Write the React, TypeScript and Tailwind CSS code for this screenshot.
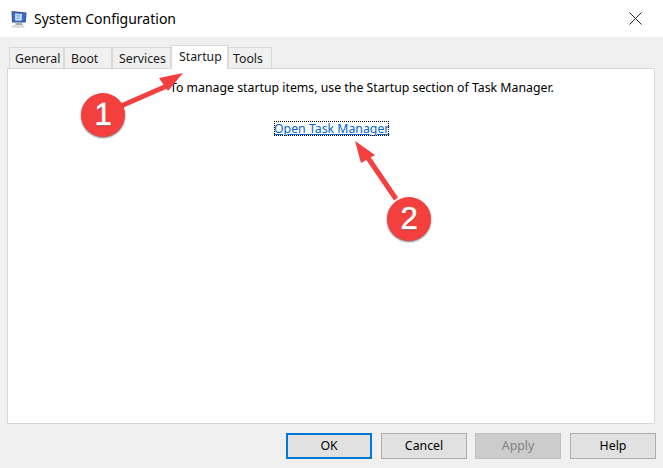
const tabs = [
  { label: "General", width: "w-[55px]", pad: "pl-[5px]" },
  { label: "Boot", width: "w-[48px]", pad: "pl-[6px]" },
  { label: "Services", width: "w-[59px]", pad: "pl-[6px]" },
];

function AppIcon() {
  return (
    <svg width="18" height="18" viewBox="0 0 18 18">
      <path d="M1.5 1 L16.5 2.5 L15.8 12.6 L2 12.6 Z" fill="#48587c" />
      <path d="M2.8 2.4 L15.2 3.6 L14.6 11.4 L3.2 11.4 Z" fill="#2c6cf0" />
      <path d="M5.2 3.4 L12 4.1 L11.6 10.4 L5.2 10.4 Z" fill="#e4effc" />
      <path d="M6.4 5.2h4M6.4 6.9h4M6.4 8.6h3.4" stroke="#5f96e6" strokeWidth="0.9" />
      <path d="M6 12.6 L12 12.6 L13 15 L5 15 Z" fill="#a9acb2" />
      <path d="M1.5 15.4 L15 15.4 L13.5 17.6 L3 17.6 Z" fill="#d0d2d6" />
    </svg>
  );
}

function Badge({ n, className }: { n: string; className: string }) {
  return (
    <div
      className={`absolute w-[44px] h-[44px] rounded-full bg-[#f43f3f] shadow-[0_1px_2px_rgba(0,0,0,0.55)] flex items-center justify-center text-white text-[31px] font-['Liberation_Sans',sans-serif] [-webkit-text-stroke:0.6px_white] [text-shadow:0_1px_1px_rgba(0,0,0,0.5)] ${className}`}
    >
      {n}
    </div>
  );
}

function DialogButton({ label, variant, className }: { label: string; variant?: "default" | "disabled"; className?: string }) {
  const look =
    variant === "default"
      ? "border-2 border-[#0078d7] bg-[#e1e1e1] text-black"
      : variant === "disabled"
        ? "border border-[#bfbfbf] bg-[#cccccc] text-[#838383]"
        : "border border-[#adadad] bg-[#e1e1e1] text-black";
  return (
    <div className={`w-[86px] h-[26px] flex items-center justify-center text-[12.3px] ${look} ${className ?? ""}`}>
      {label}
    </div>
  );
}

export default function App() {
  return (
    <div className="relative w-[663px] h-[468px] overflow-hidden flex flex-col bg-[#f0f0f0] font-['Noto_Sans',sans-serif] text-[#1a1a1a]">
      {/* title bar */}
      <div className="h-[37px] bg-white flex items-center pl-[10px] pr-[21px]">
        <AppIcon />
        <span className="ml-[6px] text-[14px] text-black">System Configuration</span>
        <svg className="ml-auto" width="13" height="13" viewBox="0 0 13 13">
          <path d="M0.5 0.5 L12.5 12.5 M12.5 0.5 L0.5 12.5" stroke="#222" strokeWidth="1" />
        </svg>
      </div>

      {/* tabs */}
      <div className="h-[31px] flex items-end pl-[9px] text-[12.3px]">
        {tabs.map((t) => (
          <div
            key={t.label}
            className={`h-[22px] ${t.width} ${t.pad} pt-[1px] flex items-center border border-b-0 border-[#d9d9d9] -mb-px bg-[#f0f0f0]`}
          >
            {t.label}
          </div>
        ))}
        <div className="relative z-10 h-[24px] w-[57px] pl-[7px] flex items-center border border-b-0 border-[#d9d9d9] -mb-px bg-white pb-[1px]">
          Startup
        </div>
        <div className="h-[22px] w-[44px] pl-[4px] pt-[1px] flex items-center border border-b-0 border-[#d9d9d9] -mb-px bg-[#f0f0f0]">
          Tools
        </div>
      </div>

      {/* panel */}
      <div className="ml-[7px] w-[648px] h-[356px] bg-white border border-[#d9d9d9] flex flex-col items-start text-[12.3px]">
        <p className="mt-[10px] ml-[162px] text-black">To manage startup items, use the Startup section of Task Manager.</p>
        <a className="mt-[24px] ml-[266px] text-[#0066cc] underline outline-1 outline-dotted outline-black -outline-offset-1 leading-[15px]">
          Open Task Manager
        </a>
      </div>

      {/* buttons */}
      <div className="flex justify-end pr-[7px] mt-[9px]">
        <DialogButton label="OK" variant="default" />
        <DialogButton label="Cancel" className="ml-[9px]" />
        <DialogButton label="Apply" variant="disabled" className="ml-[8px]" />
        <DialogButton label="Help" className="ml-[9px]" />
      </div>

      {/* annotations */}
      <svg className="absolute inset-0 pointer-events-none" width="663" height="468" viewBox="0 0 663 468">
        <path d="M121 106 L169 85" stroke="#f43f3f" strokeWidth="5" />
        <path d="M183 73 L159 78 L168 91 Z" fill="#f43f3f" />
        <path d="M396 199 L364 152" stroke="#f43f3f" strokeWidth="5" />
        <path d="M355 141 L361 163 L375 155 Z" fill="#f43f3f" />
      </svg>
      <Badge n="1" className="left-[81px] top-[93px]" />
      <Badge n="2" className="left-[387px] top-[197px]" />
    </div>
  );
}
